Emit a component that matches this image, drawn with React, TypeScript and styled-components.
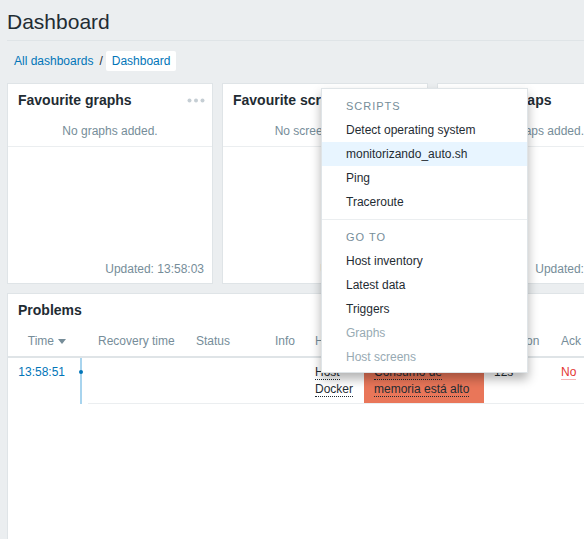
import React from "react";
import styled, { createGlobalStyle } from "styled-components";

const GlobalStyle = createGlobalStyle`
  html, body { margin: 0; padding: 0; }
  body {
    background: #ebeef0;
    font-family: "Liberation Sans", Arial, sans-serif;
    font-size: 12px;
    color: #1f2c33;
    overflow: hidden;
  }
  *, *::before, *::after { box-sizing: border-box; }
`;

const Page = styled.div`
  position: relative;
  width: 584px;
  height: 539px;
  overflow: hidden;
`;

const HeaderBar = styled.header`
  margin-left: 7px;
  height: 41px;
  padding-top: 4px;
  border-bottom: 1px solid #dfe4e7;
  display: flex;
  align-items: center;
`;

const Title = styled.h1`
  margin: 0;
  font-size: 21px;
  font-weight: normal;
  line-height: 24px;
  color: #1f2c33;
`;

const Crumbs = styled.nav`
  display: flex;
  align-items: center;
  height: 20px;
  margin: 10px 0 0 14px;
`;

const CrumbLink = styled.a`
  color: #0275b8;
  text-decoration: none;
`;

const CrumbSep = styled.span`
  margin: 0 3px 0 6px;
  color: #1f2c33;
`;

const CrumbCurrent = styled.span`
  display: inline-block;
  height: 20px;
  line-height: 20px;
  padding: 0 6px;
  background: #ffffff;
  border-radius: 2px;
  color: #0275b8;
`;

const Grid = styled.div`
  display: flex;
  gap: 9px;
  margin: 12px 0 0 7px;
`;

const Widget = styled.section`
  flex: 0 0 206px;
  height: 201px;
  background: #ffffff;
  border: 1px solid #dfe4e7;
  display: flex;
  flex-direction: column;
`;

const WidgetHead = styled.div`
  height: 32px;
  padding: 0 7px 0 10px;
  display: flex;
  align-items: center;
  justify-content: space-between;
  flex-shrink: 0;
`;

const WidgetTitle = styled.h4`
  margin: 0;
  font-size: 14px;
  font-weight: bold;
  line-height: 16px;
  color: #1f2c33;
  white-space: nowrap;
`;

const EmptyRow = styled.div`
  height: 31px;
  display: flex;
  align-items: center;
  justify-content: center;
  color: #768d99;
  border-bottom: 1px solid #ebeef0;
  white-space: nowrap;
`;

const WidgetFoot = styled.div`
  margin-top: auto;
  padding: 0 8px 7px;
  text-align: right;
  line-height: 14px;
  color: #768d99;
  white-space: nowrap;
`;

const ProblemsWidget = styled.section`
  margin: 9px 0 0 7px;
  width: 760px;
  height: 260px;
  background: #ffffff;
  border: 1px solid #dfe4e7;
`;

const COLS = "62px 18px 98px 79px 40px 59px 120px 67px 60px 60px 1fr";

const HeadRow = styled.div`
  display: grid;
  grid-template-columns: ${COLS};
  height: 32px;
  align-items: center;
  border-bottom: 2px solid #dfe4e7;
  color: #768d99;
`;

const HeadCell = styled.div<{ $right?: boolean }>`
  white-space: nowrap;
  overflow: visible;
  padding: ${(p) => (p.$right ? "0 4px 0 0" : "0 0 0 10px")};
  text-align: ${(p) => (p.$right ? "right" : "left")};
`;

const SortArrow = styled.svg`
  margin-left: 4px;
  vertical-align: 1px;
`;

const BodyRow = styled.div`
  display: grid;
  grid-template-columns: ${COLS};
`;

const Cell = styled.div<{ $right?: boolean; $bordered?: boolean; $bg?: string }>`
  padding: ${(p) => (p.$right ? "6px 5px 5px 0" : "6px 5px 5px 10px")};
  line-height: 17px;
  text-align: ${(p) => (p.$right ? "right" : "left")};
  border-bottom: ${(p) => (p.$bordered ? "1px solid #ebeef0" : "1px solid transparent")};
  background: ${(p) => p.$bg || "transparent"};
`;

const TimelineCell = styled.div`
  background: linear-gradient(#a8d4ee, #a8d4ee) no-repeat 10px 0 / 2px 100%;
`;

const TimelineDot = styled.span`
  display: block;
  width: 4px;
  height: 4px;
  margin: 12px 0 0 9px;
  border-radius: 50%;
  background: #0275b8;
`;

const TimeLink = styled.a`
  color: #0275b8;
  text-decoration: none;
`;

const DottedLink = styled.span`
  color: #1f2c33;
  border-bottom: 1px dotted #1f2c33;
`;

const AckNo = styled.span`
  color: #e33734;
  border-bottom: 1px solid rgba(227, 55, 52, 0.35);
`;

const Menu = styled.ul`
  position: absolute;
  left: 321px;
  top: 88px;
  width: 207px;
  margin: 0;
  padding: 5px 0 3px;
  list-style: none;
  background: #ffffff;
  border: 1px solid #dfe4e7;
  box-shadow: 0 6px 10px 0 rgba(0, 0, 0, 0.3);
  z-index: 10;
`;

const MenuHeading = styled.li`
  height: 24px;
  line-height: 24px;
  padding-left: 24px;
  font-size: 11px;
  letter-spacing: 1px;
  text-transform: uppercase;
  color: #768d99;
`;

const MenuItem = styled.li<{ $active?: boolean; $disabled?: boolean }>`
  height: 24px;
  line-height: 24px;
  padding-left: 24px;
  color: ${(p) => (p.$disabled ? "#97aab3" : "#1f2c33")};
  background: ${(p) => (p.$active ? "#e8f5ff" : "transparent")};
  white-space: nowrap;
`;

const MenuSeparator = styled.li`
  height: 1px;
  margin: 5px 0;
  background: #ebeef0;
`;

const Dots = () => (
  <svg width="18" height="5" viewBox="0 0 18 5" aria-hidden="true">
    <circle cx="2.5" cy="2.5" r="2" fill="#c5ced4" />
    <circle cx="9" cy="2.5" r="2" fill="#c5ced4" />
    <circle cx="15.5" cy="2.5" r="2" fill="#c5ced4" />
  </svg>
);

const favourites = [
  { title: "Favourite graphs", empty: "No graphs added.", actions: true },
  { title: "Favourite screens", empty: "No screens added.", actions: false },
  { title: "Favourite maps", empty: "No maps added.", actions: false },
];

const scripts = [
  { label: "Detect operating system" },
  { label: "monitorizando_auto.sh", active: true },
  { label: "Ping" },
  { label: "Traceroute" },
];

const gotos = [
  { label: "Host inventory" },
  { label: "Latest data" },
  { label: "Triggers" },
  { label: "Graphs", disabled: true },
  { label: "Host screens", disabled: true },
];

export default function App() {
  return (
    <>
      <GlobalStyle />
      <Page>
        <HeaderBar>
          <Title>Dashboard</Title>
        </HeaderBar>
        <Crumbs>
          <CrumbLink href="#">All dashboards</CrumbLink>
          <CrumbSep>/</CrumbSep>
          <CrumbCurrent>Dashboard</CrumbCurrent>
        </Crumbs>

        <Grid>
          {favourites.map((w) => (
            <Widget key={w.title}>
              <WidgetHead>
                <WidgetTitle>{w.title}</WidgetTitle>
                {w.actions && <Dots />}
              </WidgetHead>
              <EmptyRow>{w.empty}</EmptyRow>
              <WidgetFoot>Updated: 13:58:03</WidgetFoot>
            </Widget>
          ))}
        </Grid>

        <ProblemsWidget>
          <WidgetHead>
            <WidgetTitle>Problems</WidgetTitle>
          </WidgetHead>
          <HeadRow>
            <HeadCell $right>
              Time
              <SortArrow width="8" height="5" viewBox="0 0 8 5">
                <polygon points="0,0 8,0 4,5" fill="#768d99" />
              </SortArrow>
            </HeadCell>
            <HeadCell />
            <HeadCell>Recovery time</HeadCell>
            <HeadCell>Status</HeadCell>
            <HeadCell>Info</HeadCell>
            <HeadCell>Host</HeadCell>
            <HeadCell>Problem • Severity</HeadCell>
            <HeadCell>Duration</HeadCell>
            <HeadCell>Ack</HeadCell>
            <HeadCell>Actions</HeadCell>
            <HeadCell>Tags</HeadCell>
          </HeadRow>
          <BodyRow>
            <Cell $right>
              <TimeLink href="#">13:58:51</TimeLink>
            </Cell>
            <TimelineCell>
              <TimelineDot />
            </TimelineCell>
            <Cell $bordered />
            <Cell $bordered />
            <Cell $bordered />
            <Cell $bordered>
              <DottedLink>Host</DottedLink> <DottedLink>Docker</DottedLink>
            </Cell>
            <Cell $bordered $bg="#e97659">
              <DottedLink>Consumo de memoria está alto</DottedLink>
            </Cell>
            <Cell $bordered>12s</Cell>
            <Cell $bordered>
              <AckNo>No</AckNo>
            </Cell>
            <Cell $bordered />
            <Cell $bordered />
          </BodyRow>
        </ProblemsWidget>

        <Menu>
          <MenuHeading>Scripts</MenuHeading>
          {scripts.map((s) => (
            <MenuItem key={s.label} $active={s.active}>
              {s.label}
            </MenuItem>
          ))}
          <MenuSeparator />
          <MenuHeading>Go to</MenuHeading>
          {gotos.map((g) => (
            <MenuItem key={g.label} $disabled={g.disabled}>
              {g.label}
            </MenuItem>
          ))}
        </Menu>
      </Page>
    </>
  );
}
